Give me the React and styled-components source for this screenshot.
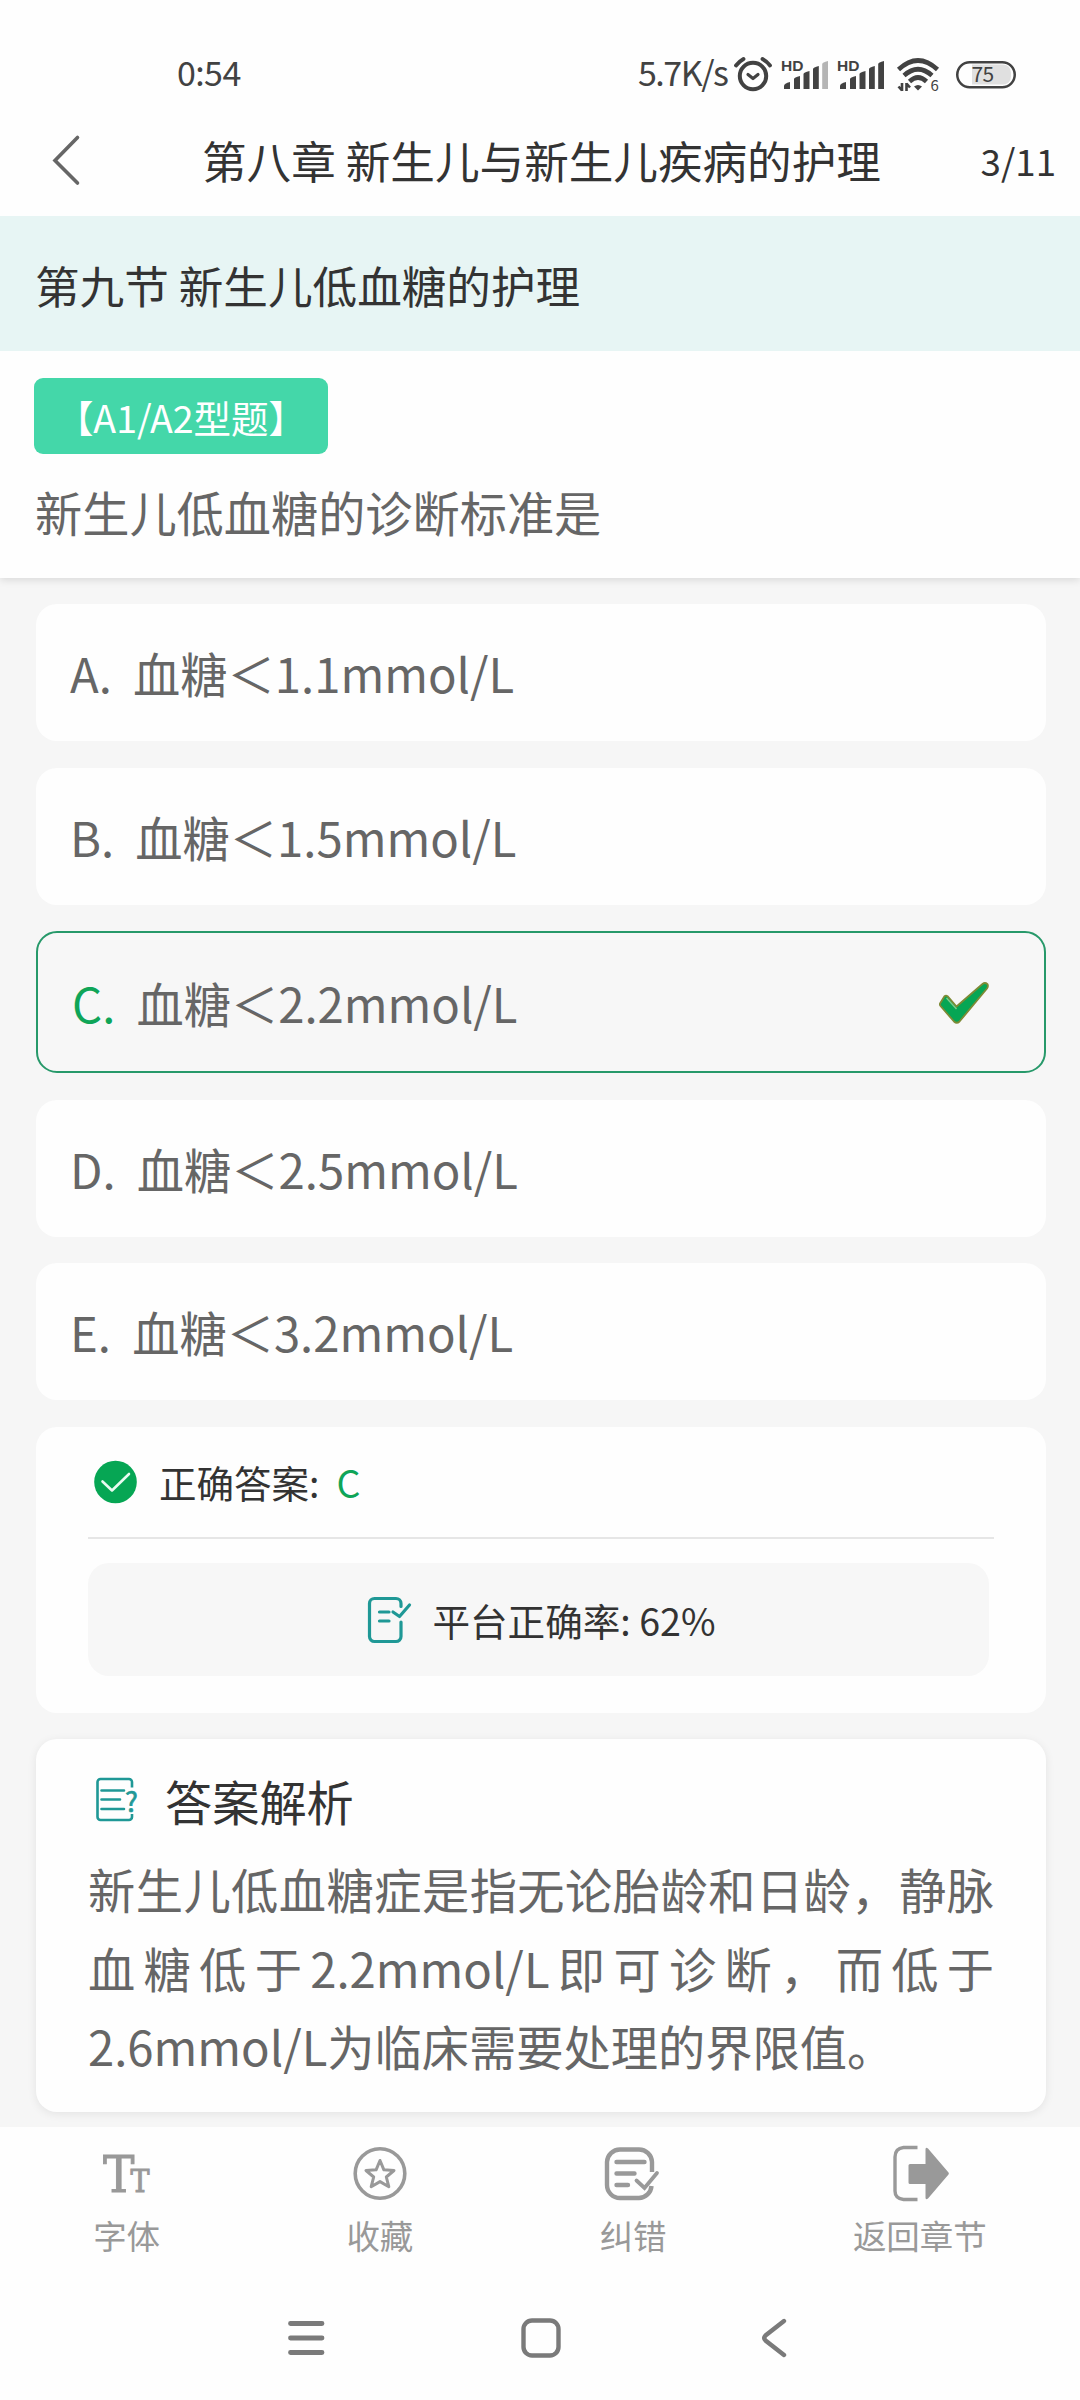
import React from 'react';
import styled, { createGlobalStyle } from 'styled-components';

const GlobalStyle = createGlobalStyle`
  * {
    box-sizing: border-box;
  }
  body {
    margin: 0;
    background-color: #fefefe;
    font-family: 'Noto Sans CJK SC', 'Noto Sans', sans-serif;
    color: #333333;
  }
  svg {
    display: block;
    flex-shrink: 0;
    overflow: visible;
  }
`;

const s = {
  Container: styled.div`
    display: flex;
    flex-direction: column;
    width: 1080px;
    height: 2400px;
    overflow: hidden;
    background-color: #fefefe;
  `,
  StatusBar: styled.div`
    display: flex;
    justify-content: space-between;
    align-items: center;
    height: 108px;
    padding: 35px 64px 0 177px;
    color: #424242;
    font-size: 34px;
    line-height: 40px;
    letter-spacing: -0.6px;
  `,
  StatusIcons: styled.div`
    display: flex;
    align-items: center;
    height: 40px;
  `,
  Speed: styled.span`
    width: 96px;
    letter-spacing: -1.5px;
    white-space: nowrap;
  `,
  StatusIcon: styled.svg`
    width: ${(props) => props.$width}px;
    height: 40px;
    margin: 7px ${(props) => props.$gap || 0}px 0 0;
  `,
  Header: styled.header`
    display: flex;
    align-items: center;
    height: 108px;
    padding: 0 24px 4px 52px;
  `,
  BackButton: styled.div`
    width: 150px;
  `,
  Title: styled.h1`
    flex: 1;
    margin: 0;
    font-size: 44.6px;
    font-weight: 400;
    line-height: 64px;
    white-space: nowrap;
  `,
  Counter: styled.span`
    font-size: 36.7px;
    line-height: 56px;
  `,
  Section: styled.div`
    position: relative;
    z-index: 1;
    display: flex;
    align-items: center;
    height: 135px;
    padding: 3px 35px 0;
    background-color: #e7f5f4;
    font-size: 44.6px;
    line-height: 64px;
  `,
  Question: styled.div`
    position: relative;
    display: flex;
    flex-direction: column;
    align-items: flex-start;
    height: 227px;
    padding: 27px 35px 0 34px;
    background-color: #fefefe;
    box-shadow: 0 2px 8px rgba(0, 0, 0, 0.12);
  `,
  Badge: styled.div`
    display: flex;
    justify-content: center;
    align-items: center;
    width: 294px;
    height: 76px;
    padding-top: 1px;
    border-radius: 9px;
    background-color: #44d7a9;
    color: #ffffff;
    font-size: 37.5px;
    line-height: 56px;
    white-space: nowrap;
  `,
  QuestionText: styled.p`
    margin: 23px 0 0 1px;
    color: #666666;
    font-size: 47.2px;
    line-height: 70px;
  `,
  Content: styled.main`
    display: flex;
    flex-direction: column;
    gap: 26.5px;
    height: 1549px;
    padding: 26px 34.5px 0 36px;
    background-color: #f6f6f6;
  `,
  Option: styled.div`
    display: flex;
    align-items: center;
    height: ${(props) => (props.$correct ? 142 : 137)}px;
    padding: 1px 55px 0 34px;
    border: ${(props) => (props.$correct ? '2px solid #27996a' : 'none')};
    border-radius: 21px;
    background-color: ${(props) => (props.$correct ? '#f7f7f7' : '#fefefe')};
    color: #666666;
    font-size: 47.25px;
    line-height: 70px;
    white-space: pre;
  `,
  OptionKey: styled.span`
    color: ${(props) => (props.$correct ? '#0fa558' : 'inherit')};
  `,
  OptionLabel: styled.span`
    flex: 1;
  `,
  Card: styled.section`
    height: ${(props) => props.$height}px;
    padding: 0 52px;
    border-radius: 21px;
    background-color: #fefefe;
    box-shadow: ${(props) => (props.$raised ? '0 2px 10px rgba(0, 0, 0, 0.08)' : 'none')};
  `,
  AnswerRow: styled.div`
    display: flex;
    align-items: center;
    width: 906px;
    height: 112px;
    padding: 0 0 0 6px;
    border-bottom: 2px solid #e6e6e6;
    font-size: 37.5px;
    line-height: 56px;
  `,
  AnswerText: styled.span`
    margin-left: 22px;
  `,
  AnswerKey: styled.span`
    margin-left: 17px;
    color: #0fa558;
  `,
  RateBox: styled.div`
    display: flex;
    justify-content: center;
    align-items: center;
    gap: 20px;
    width: 901px;
    height: 113px;
    margin-top: 24px;
    padding: 1px 0 0 7px;
    border-radius: 21px;
    background-color: #f7f7f7;
    font-size: 37.6px;
    line-height: 56px;
  `,
  AnalysisHead: styled.div`
    display: flex;
    align-items: center;
    height: 111px;
    padding: 12px 0 0 8px;
    line-height: 70px;

    svg {
      margin-bottom: 4px;
    }
  `,
  AnalysisTitle: styled.h2`
    margin: 0 0 0 26px;
    font-size: 47.2px;
    font-weight: 400;
  `,
  AnalysisText: styled.p`
    width: 906px;
    margin: 0;
    color: #666666;
    font-size: 47.25px;
    line-height: 78.5px;
    text-align: justify;
  `,
  TabBar: styled.nav`
    display: flex;
    justify-content: space-around;
    height: 150px;
    padding-top: 17px;
  `,
  Tab: styled.div`
    display: flex;
    flex-direction: column;
    align-items: center;
    color: #999999;
    font-size: 33.5px;
    line-height: 50px;
  `,
  TabIcon: styled.svg`
    width: 60px;
    height: 60px;
    margin-bottom: 6px;
  `,
  SystemNav: styled.div`
    display: flex;
    justify-content: space-between;
    align-items: center;
    height: 123px;
    padding: 0 293px 1px 287px;
  `,
};

const options = [
  { key: 'A', label: '血糖＜1.1mmol/L' },
  { key: 'B', label: '血糖＜1.5mmol/L' },
  { key: 'C', label: '血糖＜2.2mmol/L', correct: true },
  { key: 'D', label: '血糖＜2.5mmol/L' },
  { key: 'E', label: '血糖＜3.2mmol/L' },
];

const AlarmIcon = () => (
  <s.StatusIcon $width={38} $gap={10} viewBox="0 0 38 40" fill="none" stroke="#424242">
    <circle cx="19" cy="21" r="13.2" strokeWidth="4" />
    <path d="M14 19.500l5 4 5-4" strokeWidth="3.200" strokeLinecap="round" strokeLinejoin="round" />
    <path d="M2 10.500Q5 6.500 9.500 4M36 10.500Q33 6.500 28.500 4" strokeWidth="3.800" strokeLinecap="round" />
  </s.StatusIcon>
);

const SignalIcon = ({ weak, gap }) => (
  <s.StatusIcon $width={46} $gap={gap} viewBox="0 0 46 40" fill="#424242">
    <text x="-1" y="16.2" fontFamily="Liberation Sans, sans-serif" fontSize="15.5" fontWeight="700" letterSpacing="0">
      HD
    </text>
    <path d="M2 34v-3q0-2.500 6-4v7z" />
    <path d="M12 34V24q0-1.500 6-3v13z" />
    <path d="M21.500 34V19q0-1.500 6-3v18z" />
    <path d="M31 34V14q0-1.500 5.800-3v23z" />
    <path d="M40.200 34V9q0-1.500 5.800-3v28z" fill={weak ? '#b5b5b5' : '#424242'} />
  </s.StatusIcon>
);

const WifiIcon = () => (
  <s.StatusIcon $width={43} $gap={16} viewBox="0 0 43 40" fill="none" stroke="#424242" strokeWidth="4.600">
    <path d="M1.500 14.500Q21 -3.500 40.500 14.500" />
    <path d="M7 20.500Q21 8 35 20.500" />
    <path d="M12.500 26.500Q21 18.500 29.500 26.500" />
    <path d="M17 31.500Q21 28.500 25 31.500L21 35.500z" fill="#424242" stroke="none" />
    <path d="M5 28v8M5 35.500l-3.500-4M9.500 36v-8M9.500 28.500l3.500 4" strokeWidth="2.600" />
    <text x="33.500" y="36" fill="#424242" stroke="none" fontSize="15" letterSpacing="0">
      6
    </text>
  </s.StatusIcon>
);

const BatteryIcon = () => (
  <s.StatusIcon $width={60} viewBox="0 0 60 40">
    <path d="M16 9.500h31a8 8 0 0 1 8 8v4a8 8 0 0 1-8 8H16z" fill="#e0e0e0" />
    <rect x="1.250" y="7.250" width="57.500" height="25" rx="12.500" fill="none" stroke="#424242" strokeWidth="2.500" />
    <text x="15.500" y="27" fontSize="21" fill="#424242" letterSpacing="-0.7">
      75
    </text>
  </s.StatusIcon>
);

const CheckMark = () => (
  <svg width="50" height="42" viewBox="0 0 50 42">
    <path
      d="M1 21.500L5.500 14.200Q7 13 8.500 14.200L17.500 24.500L43.500 2Q46 0 48.500 2.200Q49.500 4.500 48 6.500L20.500 39.500Q17.800 42 15 39.500L1.500 24Q0.500 22.800 1 21.500Z"
      fill="#06a654"
      stroke="#7d8a35"
      strokeWidth="1.800"
      strokeLinejoin="round"
    />
    <path d="M7.500 16l10 11" stroke="#7fc98b" strokeWidth="1.400" />
  </svg>
);

const CorrectIcon = () => (
  <svg width="43" height="44" viewBox="0 0 43 44" fill="none">
    <circle cx="21.500" cy="22" r="21.300" fill="#06a654" />
    <path d="M8.500 21.500l9.500 9L35 14" stroke="#e9fbf1" strokeWidth="2.600" strokeLinecap="round" strokeLinejoin="round" />
  </svg>
);

const RateIcon = () => (
  <svg width="44" height="46" viewBox="0 0 44 46" fill="none" stroke="#1f9896" strokeWidth="3.200" strokeLinecap="round">
    <path d="M33 9.500V6.500a5 5 0 0 0-5-5H6.500a5 5 0 0 0-5 5v33a5 5 0 0 0 5 5H28a5 5 0 0 0 5-5V25" />
    <path d="M11.500 15h9.500M11.500 24h9.500" />
    <path d="M25 15l6.500 4.500L41.500 8" strokeLinejoin="round" />
  </svg>
);

const AnalysisIcon = () => (
  <svg width="43" height="44" viewBox="0 0 43 44" fill="none" stroke="#1f9896" strokeWidth="2.600">
    <path d="M36 10.500V5a3 3 0 0 0-3-3H4.500a3 3 0 0 0-3 3v35a3 3 0 0 0 3 3H33a3 3 0 0 0 3-3v-3" />
    <path d="M5.500 13.500H28M5.500 22.500h18.500M5.500 32H28" strokeLinecap="round" />
    <text x="29" y="34.500" fill="#1f9896" stroke="#1f9896" strokeWidth="0.700" fontSize="27">
      ?
    </text>
  </svg>
);

const FontIcon = () => (
  <s.TabIcon viewBox="0 0 60 60" fill="#999999" stroke="#999999" strokeWidth="1" fontFamily="DejaVu Serif, serif">
    <text x="6" y="48" fontSize="51" textLength="31.500" lengthAdjust="spacingAndGlyphs">
      T
    </text>
    <text x="33.500" y="48" fontSize="32" textLength="19" lengthAdjust="spacingAndGlyphs">
      T
    </text>
  </s.TabIcon>
);

const StarIcon = () => (
  <s.TabIcon viewBox="0 0 60 60" fill="none" stroke="#999999">
    <circle cx="30" cy="29.500" r="24.800" strokeWidth="3.600" />
    <path
      d="M30 16.500l3.900 9.300 10.100.7-7.700 6.500 2.500 9.700L30 37.600l-8.800 5.100 2.500-9.700-7.700-6.500 10.100-.7z"
      strokeWidth="3"
      strokeLinejoin="round"
    />
  </s.TabIcon>
);

const CorrectionIcon = () => (
  <s.TabIcon viewBox="0 0 60 60" fill="none" stroke="#999999" strokeWidth="4.400" strokeLinecap="round">
    <path d="M49 28V18A13 13 0 0 0 36 5.500H17A13 13 0 0 0 4 18v23a13 13 0 0 0 13 13h19a13 13 0 0 0 12.500-12" strokeLinecap="butt" />
    <path d="M13.500 18h28M13.500 29.500h18M13.500 41h11.500" />
    <path d="M33.500 36.500l8 7.500L54 29" strokeWidth="3.800" />
  </s.TabIcon>
);

const ReturnIcon = () => (
  <s.TabIcon viewBox="0 0 60 60" fill="none">
    <path d="M27.500 3.500H13.500Q5 4.500 5 13v34q0 7.500 8.500 8.500H27.500" stroke="#999999" strokeWidth="3.400" />
    <path
      d="M20 20h15.500V5.500q0-3 2.500-1L58.500 28.500q.8 1 0 2L38 54.500q-2.500 2-2.500-1V40H20q-1.500 0-1.500-1.500v-17q0-1.500 1.500-1.500z"
      fill="#999999"
    />
  </s.TabIcon>
);

const tabs = [
  { title: '字体', Icon: FontIcon },
  { title: '收藏', Icon: StarIcon },
  { title: '纠错', Icon: CorrectionIcon },
  { title: '返回章节', Icon: ReturnIcon },
];

const App = () => {
  return (
    <s.Container>
      <GlobalStyle />
      <s.StatusBar>
        <span>0:54</span>
        <s.StatusIcons>
          <s.Speed>5.7K/s</s.Speed>
          <AlarmIcon />
          <SignalIcon weak gap={10} />
          <SignalIcon gap={13} />
          <WifiIcon />
          <BatteryIcon />
        </s.StatusIcons>
      </s.StatusBar>

      <s.Header>
        <s.BackButton>
          <svg width="28" height="50" viewBox="0 0 28 50" fill="none" stroke="#666666" strokeWidth="3.600">
            <path d="M25.500 2.500L3 25.500l22.500 22.500" strokeLinecap="round" />
          </svg>
        </s.BackButton>
        <s.Title>第八章 新生儿与新生儿疾病的护理</s.Title>
        <s.Counter>3/11</s.Counter>
      </s.Header>

      <s.Section>第九节 新生儿低血糖的护理</s.Section>

      <s.Question>
        <s.Badge>【A1/A2型题】</s.Badge>
        <s.QuestionText>新生儿低血糖的诊断标准是</s.QuestionText>
      </s.Question>

      <s.Content>
        {options.map(({ key, label, correct }) => (
          <s.Option key={key} $correct={correct}>
            <s.OptionKey $correct={correct}>{`${key}.  `}</s.OptionKey>
            <s.OptionLabel>{label}</s.OptionLabel>
            {correct && <CheckMark />}
          </s.Option>
        ))}

        <s.Card $height={286}>
          <s.AnswerRow>
            <CorrectIcon />
            <s.AnswerText>正确答案:</s.AnswerText>
            <s.AnswerKey>C</s.AnswerKey>
          </s.AnswerRow>
          <s.RateBox>
            <RateIcon />
            <span>平台正确率: 62%</span>
          </s.RateBox>
        </s.Card>

        <s.Card $height={373} $raised>
          <s.AnalysisHead>
            <AnalysisIcon />
            <s.AnalysisTitle>答案解析</s.AnalysisTitle>
          </s.AnalysisHead>
          <s.AnalysisText>
            新生儿低血糖症是指无论胎龄和日龄，静脉血糖低于2.2mmol/L即可诊断，而低于2.6mmol/L为临床需要处理的界限值。
          </s.AnalysisText>
        </s.Card>
      </s.Content>

      <s.TabBar>
        {tabs.map(({ title, Icon }) => (
          <s.Tab key={title}>
            <Icon />
            {title}
          </s.Tab>
        ))}
      </s.TabBar>

      <s.SystemNav>
        <svg width="38" height="40" viewBox="0 0 38 40" stroke="#7a7a7a" strokeWidth="4.800" strokeLinecap="round">
          <path d="M3.500 5.500h31.500M3.500 20h31.500M3.500 34.500h31.500" />
        </svg>
        <svg width="40" height="40" viewBox="0 0 40 40" fill="none" stroke="#7a7a7a" strokeWidth="4.400">
          <rect x="2.500" y="2.500" width="35" height="35" rx="8.500" />
        </svg>
        <svg width="31" height="40" viewBox="0 0 31 40" fill="none" stroke="#7a7a7a" strokeWidth="4.400">
          <path d="M28 3L9.500 17.500Q7 20 9.500 22.500L28 37" strokeLinecap="round" />
        </svg>
      </s.SystemNav>
    </s.Container>
  );
};

export default App;
